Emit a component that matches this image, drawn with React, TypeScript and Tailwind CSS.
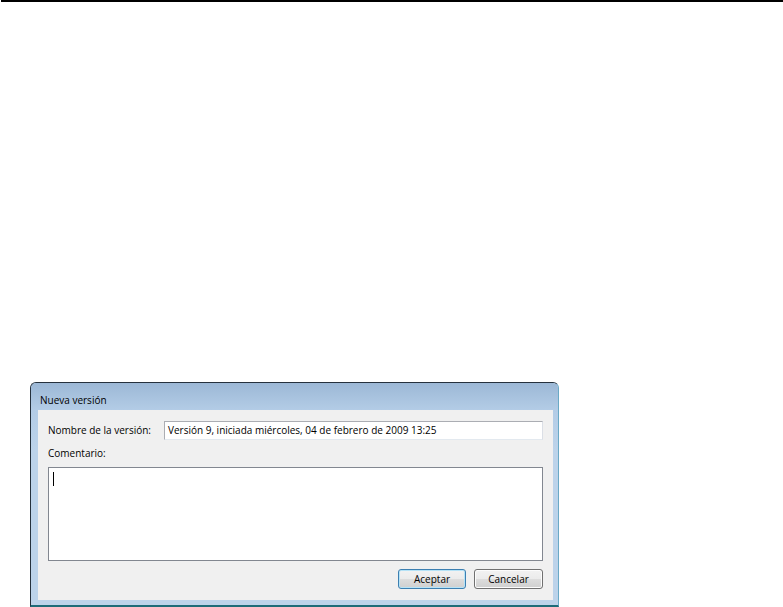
import React from 'react';

const font = { fontFamily: '"Open Sans", "Noto Sans", sans-serif' };

const VistaButton = ({ label, focused = false, width }: { label: string; focused?: boolean; width: string }) => (
    <button
        className={`${width} h-[20px] rounded-[3px] border text-[10px] leading-none text-black bg-[linear-gradient(to_bottom,#f2f2f2_0%,#ebebeb_50%,#dddddd_50%,#cfcfcf_100%)] ${
            focused ? 'border-[#3c7fb1] shadow-[inset_0_0_0_1px_#b6e3f7]' : 'border-[#707070] shadow-[inset_0_0_0_1px_#fcfcfc]'
        }`}
    >
        {label}
    </button>
);

export default function App() {
    return (
        <div className="w-[783px] h-[607px] bg-white overflow-hidden flex flex-col" style={font}>
            {/* top rule */}
            <div className="h-[2px] bg-black ml-[1px]" />

            {/* Dialog window */}
            <div className="mt-[380px] ml-[30px] w-[529px] h-[225px] rounded-t-[6px] border border-[#25313d] border-r-[#6aa9c6] border-b-2 border-b-[#1d6b78] bg-[#bcd3ea] flex flex-col overflow-hidden">
                {/* Title bar */}
                <div className="h-[27px] shrink-0 pl-[9px] pt-[10px] text-[10px] leading-[14px] text-black bg-[linear-gradient(to_bottom,#9cb8d6,#b3cce6)]">
                    Nueva versión
                </div>

                {/* Client area */}
                <div className="flex-1 flex px-[7px] pb-[5px] bg-[linear-gradient(to_bottom,#b3cce6_0px,#bcd3ea_40px)]">
                    <div className="flex-1 flex flex-col bg-[#f0f0f0] px-[10px] pt-[11px] pb-[10px] mr-[-2px]">
                        <div className="flex items-center h-[19px]">
                            <span className="w-[116px] shrink-0 whitespace-nowrap text-[10px] text-black">Nombre de la versión:</span>
                            <div className="flex-1 h-[19px] bg-white border border-[#abadb3] border-r-[#dbdfe6] border-b-[#e3e9ef] flex items-center pl-[3px] text-[10px] text-black whitespace-nowrap">
                                Versión 9, iniciada miércoles, 04 de febrero de 2009 13:25
                            </div>
                        </div>

                        <div className="mt-[5px] h-[16px] text-[10px] leading-[16px] text-black">Comentario:</div>

                        <div className="mt-[6px] h-[94px] bg-white border border-[#828790] pl-[4px] pt-[4px]">
                            <div className="w-[1px] h-[14px] bg-black" />
                        </div>

                        <div className="mt-[8px] flex justify-end gap-[8px]">
                            <VistaButton label="Aceptar" focused width="w-[68px]" />
                            <VistaButton label="Cancelar" width="w-[69px]" />
                        </div>
                    </div>
                </div>
            </div>
        </div>
    );
}
